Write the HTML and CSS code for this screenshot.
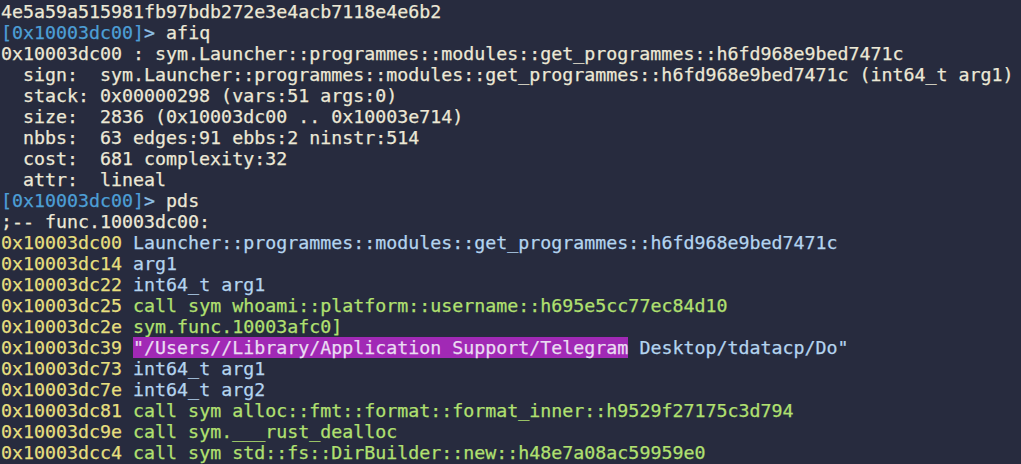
FILE: index.html
```html
<!DOCTYPE html>
<html lang="en">
<head>
    <meta charset="UTF-8">
    <title>r2 session</title>
    <link rel="stylesheet" href="styles.css">
</head>
<body>
    <div class="term">
        <div class="line">4e5a59a515981fb97bdb272e3e4acb7118e4e6b2</div>
        <div class="line"><span class="prompt">[0x10003dc00]</span><span class="gt">&gt;</span> afiq</div>
        <div class="line">0x10003dc00 : sym.Launcher::programmes::modules::get_programmes::h6fd968e9bed7471c</div>
        <div class="line">  sign:  sym.Launcher::programmes::modules::get_programmes::h6fd968e9bed7471c (int64_t arg1)</div>
        <div class="line">  stack: 0x00000298 (vars:51 args:0)</div>
        <div class="line">  size:  2836 (0x10003dc00 .. 0x10003e714)</div>
        <div class="line">  nbbs:  63 edges:91 ebbs:2 ninstr:514</div>
        <div class="line">  cost:  681 complexity:32</div>
        <div class="line">  attr:  lineal</div>
        <div class="line"><span class="prompt">[0x10003dc00]</span><span class="gt">&gt;</span> pds</div>
        <div class="line">;-- func.10003dc00:</div>
        <div class="line"><span class="addr">0x10003dc00</span> <span class="blue">Launcher::programmes::modules::get_programmes::h6fd968e9bed7471c</span></div>
        <div class="line"><span class="addr">0x10003dc14</span> <span class="blue">arg1</span></div>
        <div class="line"><span class="addr">0x10003dc22</span> <span class="blue">int64_t arg1</span></div>
        <div class="line"><span class="addr">0x10003dc25</span> <span class="green">call sym whoami::platform::username::h695e5cc77ec84d10</span></div>
        <div class="line"><span class="addr">0x10003dc2e</span> <span class="green">sym.func.10003afc0]</span></div>
        <div class="line"><span class="addr">0x10003dc39</span> <span class="mark">"/Users//Library/Application Support/Telegram</span><span class="blue"> Desktop/tdatacp/Do"</span></div>
        <div class="line"><span class="addr">0x10003dc73</span> <span class="blue">int64_t arg1</span></div>
        <div class="line"><span class="addr">0x10003dc7e</span> <span class="blue">int64_t arg2</span></div>
        <div class="line"><span class="addr">0x10003dc81</span> <span class="green">call sym alloc::fmt::format::format_inner::h9529f27175c3d794</span></div>
        <div class="line"><span class="addr">0x10003dc9e</span> <span class="green">call sym.___rust_dealloc</span></div>
        <div class="line"><span class="addr">0x10003dcc4</span> <span class="green">call sym std::fs::DirBuilder::new::h48e7a08ac59959e0</span></div>
    </div>
</body>
</html>
```

FILE: styles.css
```css
html, body {
    margin: 0;
    padding: 0;
    background: #272b3e;
}

.term {
    width: 1021px;
    height: 464px;
    overflow: hidden;
    padding: 1px 0 0 1px;
    box-sizing: border-box;
    font-family: "DejaVu Sans Mono", "Liberation Mono", monospace;
    font-size: 18.3px;
    line-height: 21px;
    color: #ece8d6;
    -webkit-text-stroke: 0.25px;
}

.line {
    white-space: pre;
    height: 21px;
}

.prompt {
    color: #4d9fd6;
}

.gt {
    color: #8fc0e6;
}

.addr {
    color: #e6df7e;
}

.blue {
    color: #b4d4ef;
}

.green {
    color: #b1e070;
}

.mark {
    background: #a129b5;
    color: #eadcf2;
}
```
